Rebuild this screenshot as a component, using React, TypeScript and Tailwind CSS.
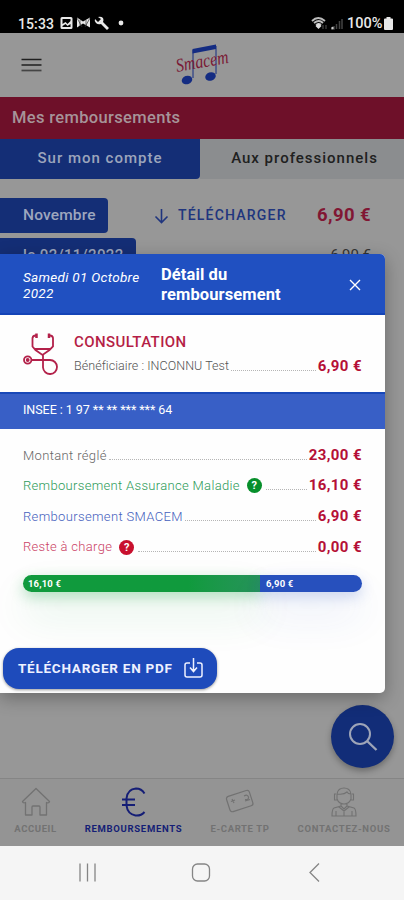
import type { ReactNode } from 'react';

interface DetailLine {
    label: string;
    amount: string;
    labelClass: string;
    helpClass?: string;
}

const LINES: DetailLine[] = [
    { label: 'Montant réglé', amount: '23,00 €', labelClass: 'text-[#666] tracking-[0.35px]' },
    { label: 'Remboursement Assurance Maladie', amount: '16,10 €', labelClass: 'text-[#2c9a58] tracking-[0.32px]', helpClass: 'bg-[#078f2b]' },
    { label: 'Remboursement SMACEM', amount: '6,90 €', labelClass: 'text-[#4560bd] tracking-[0.35px]' },
    { label: 'Reste à charge', amount: '0,00 €', labelClass: 'text-[#cb4265] tracking-[0.32px]', helpClass: 'bg-[#c8102e]' },
];

const amountClass = 'shrink-0 text-[15px] font-bold leading-none tracking-[0.4px] text-[#b50f36]';

function StatusBar() {
    return (
        <div className="flex h-[33px] shrink-0 items-end bg-black pr-[11px] pb-px pl-[18px] text-[#e8e8e8]">
            <span className="w-[42px] text-[14px] leading-[16px] font-medium tracking-[0.1px]">15:33</span>
            {/* Notifications */}
            <svg width="66" height="15" viewBox="0 0 66 15" className="mb-px" fill="currentColor">
                <path fillRule="evenodd" d="M2 1h9q1.500 0 1.500 1.500v9q0 1.500-1.500 1.500H2Q.5 13 .5 11.500v-9Q.5 1 2 1Zm.500 2v5l3-2 2 2 3-3V3Zm0 8h8V8l-3 2-2-2-3 2Z" />
                <path d="M17 1.500l6 4 7-4v10l-7-4-6 4Z" />
                <path d="M20 4v6M26 4v6M17 2l5 9M30 2l-5 9" stroke="#333" strokeWidth=".7" />
                <path d="M35 3l3 3 3-3-3-2q3-1 5 1 1 2 0 4l6 6-2 2-6-6q-3 1-5-1-2-2-1-4Z" />
                <circle cx="61" cy="7" r="2.400" />
            </svg>
            <svg width="33" height="15" viewBox="0 0 33 15" className="mb-px ml-auto" fill="none">
                <path d="M1 5q6-6 13 0M3 7q5-4 9 0M5 9q3-2 5 0" stroke="#bbb" strokeWidth="1.800" />
                <path d="M7.500 7l3 3-3 3-3-3Z" fill="#ddd" />
                <path d="M12 9v4M15 9v4" stroke="#555" strokeWidth="1" />
                <path d="M20 13h3v-3M25.500 13V8M28.500 13V5M31 13V3" stroke="#444" strokeWidth="1.500" />
                <circle cx="21.500" cy="12" r="1.200" fill="#ccc" />
            </svg>
            <span className="ml-[3px] w-[37px] text-[14.500px] leading-[16px] font-medium whitespace-nowrap">100%</span>
            <svg width="9" height="13" viewBox="0 0 9 13" className="mb-[2px]" fill="currentColor">
                <path d="M2.500 0h4v1.500H8q1 0 1 1V12q0 1-1 1H1q-1 0-1-1V2.500q0-1 1-1h1.500Z" />
            </svg>
        </div>
    );
}

function Logo() {
    return (
        <svg width="64" height="48" viewBox="0 0 64 48" className="absolute top-[8px] left-[173px] overflow-visible">
            <path d="M19.500 8L43 3.500v4.500L19.500 12.500Z" fill="#142c82" />
            <path d="M20 9v28M43 5v28" stroke="#142c82" strokeWidth="1" />
            <ellipse cx="14" cy="39" rx="5.400" ry="4.200" transform="rotate(-20 14 39)" fill="#142c82" />
            <ellipse cx="37.500" cy="35.500" rx="5.400" ry="4.200" transform="rotate(-20 37.500 35.500)" fill="#142c82" />
            <text x="4" y="31" transform="rotate(-10 4 31)" textLength="53" lengthAdjust="spacingAndGlyphs" fontFamily="Liberation Serif, serif" fontStyle="italic" fontSize="19" fill="#7a1935">
                Smacem
            </text>
        </svg>
    );
}

function HelpBadge({ className }: { className: string }) {
    return (
        <span className={`ml-[7px] mr-[2px] flex size-[15px] shrink-0 items-center justify-center rounded-full text-[11px] leading-none font-bold text-white ${className}`}>
            ?
        </span>
    );
}

function Leader() {
    return <span className="mx-[2px] mb-[1px] h-[10px] flex-1 border-b border-dotted border-[#b5b5b5]" />;
}

function Stethoscope() {
    return (
        <svg width="36" height="42" viewBox="0 0 36 42" fill="none" stroke="#b3214a" strokeWidth="1.800" className="shrink-0">
            <path d="M13.500 2.500h-1Q10 2.500 9.500 5v8.500l3 3.500 7 5 7-5 3.500-3.500V5q-.500-2.500-3-2.500h-1M12 16h15.500M20 22v12.500a7 7 0 1 0 7-7.500H8.500" />
            <path d="M13.500.5v4.500M26 .5v4.500" strokeWidth="2.500" />
            <circle cx="4.700" cy="27" r="3.700" />
            <circle cx="4.700" cy="27" r="1" />
        </svg>
    );
}

function NavItem({ label, className, children }: { label: string; className: string; children: ReactNode }) {
    return (
        <div className={`flex flex-col items-center text-[9.500px] leading-[12px] font-bold whitespace-nowrap ${className}`}>
            <span className="flex h-[32px] items-center justify-center">{children}</span>
            <span className="mt-[5px]">{label}</span>
        </div>
    );
}

function BottomNav() {
    return (
        <div className="flex h-[68px] shrink-0 border-t border-[#858585] bg-[#949494] pt-[7px] text-[#727272]">
            <NavItem label="ACCUEIL" className="w-[71px] tracking-[0.6px]">
                <svg width="30" height="30" viewBox="0 0 30 30" fill="none" stroke="currentColor" strokeWidth="1.300">
                    <path d="M1.500 14.500L15 1.500l13.500 13q-.500 2-3 1V28H19v-8q0-1-1-1h-6q-1 0-1 1v8H4.500V15.500q-2.500 1-3-1Z" strokeLinejoin="round" />
                </svg>
            </NavItem>
            <NavItem label="REMBOURSEMENTS" className="w-[125px] text-[#151e76] tracking-[0.7px]">
                <svg width="26" height="30" viewBox="0 0 26 30" fill="none" stroke="currentColor" strokeWidth="2">
                    <path d="M23.500 6.500Q20.500 1.500 15 1.500 6.500 2 5.500 11.500v7q1 8.500 9 10 5.500.5 9-3.500M1 12.500h13M1 18h13" />
                </svg>
            </NavItem>
            <NavItem label="E-CARTE TP" className="w-[88px] tracking-[0.6px]">
                <svg width="30" height="28" viewBox="0 0 30 28" fill="none" stroke="currentColor" strokeWidth="1.200">
                    <rect x="3" y="5" width="24" height="16" rx="2.500" transform="rotate(-18 15 14)" />
                    <path d="M6 13.500l4-1.500M7 11l2 4M19 8q3.500-2 4.500 1 .5 3-3.500 2.500M20 13l5-1.500" />
                </svg>
            </NavItem>
            <NavItem label="CONTACTEZ-NOUS" className="w-[120px] tracking-[0.7px]">
                <svg width="28" height="30" viewBox="0 0 28 30" fill="none" stroke="currentColor" strokeWidth="1.100">
                    <path d="M7 7q1-6 7-6t7 6v5q-2 5-7 5t-7-5ZM7 7q7 1 10-2 1 2 4 2M6 7H4.500v6H7M22 7h1.500v6H21M11 16v3l-7 2q-2 1-2 8h24q0-7-2-8l-7-2v-3M9 20l5 4 5-4M14 24v5M6 24v5M22 24v5M11 19l3 3 3-3" />
                </svg>
            </NavItem>
        </div>
    );
}

function SystemNav() {
    return (
        <div className="flex h-[54px] shrink-0 items-center bg-[#f5f5f5] pl-[78px]">
            <svg width="246" height="22" viewBox="0 0 246 22" fill="none" stroke="#858585" strokeWidth="1.300">
                <path d="M2 1.500v18M9.500 1.500v18M17 1.500v18" />
                <rect x="114.500" y="2" width="17" height="17" rx="5" />
                <path d="M241 1.500l-9 9 9 9" />
            </svg>
        </div>
    );
}

function DetailModal() {
    return (
        <div className="absolute top-[254px] left-0 h-[439px] w-[385px] overflow-hidden rounded-r-[5px] bg-[#fefefe] shadow-[0_5px_18px_rgba(0,0,0,0.3)]">
            <div className="flex h-[61px] border-b-2 border-[#1444b7] bg-[#2050c1] text-white">
                <p className="w-[161px] pt-[15px] pl-[23px] text-[13.500px] leading-[16px] tracking-[0.3px] whitespace-nowrap italic">
                    Samedi 01 Octobre
                    <br />
                    2022
                </p>
                <p className="w-[180px] pt-[11px] text-[16.500px] leading-[20px] font-bold tracking-[0.1px]">
                    Détail du
                    <br />
                    remboursement
                </p>
                <svg width="12" height="12" viewBox="0 0 12 12" className="mt-[25px] ml-[8px]" stroke="currentColor" strokeWidth="1.400">
                    <path d="M1 1l10 10M11 1L1 11" />
                </svg>
            </div>

            {/* Care item */}
            <div className="flex h-[77px] pt-[18px] pr-[23px] pl-[23px]">
                <Stethoscope />
                <div className="ml-[15px] flex-1">
                    <p className="text-[15px] leading-[18px] font-medium tracking-[0.4px] text-[#b51e46]">CONSULTATION</p>
                    <div className="mt-[6px] flex h-[18px] items-center">
                        <span className="text-[12.500px] font-light tracking-[0.05px] whitespace-nowrap text-[#555]">Bénéficiaire : INCONNU Test</span>
                        <Leader />
                        <span className={amountClass}>6,90 €</span>
                    </div>
                </div>
            </div>

            <div className="h-[37px] border-t-2 border-[#1848b8] bg-[#385fc6] pt-[7px] pl-[23px] text-[12.500px] leading-[18px] tracking-[-0.05px] text-white">
                INSEE : 1 97 ** ** *** *** 64
            </div>

            <div className="flex flex-col pt-[11px] pr-[23px] pl-[23px]">
                {LINES.map((line) => (
                    <div key={line.label} className="flex h-[30.600px] items-center">
                        <span className={`text-[13px] font-light whitespace-nowrap ${line.labelClass}`}>{line.label}</span>
                        {line.helpClass && <HelpBadge className={line.helpClass} />}
                        <Leader />
                        <span className={amountClass}>{line.amount}</span>
                    </div>
                ))}
            </div>

            {/* Share of each payer */}
            <div className="mx-[23px] mt-[13px] flex h-[17px] text-[9.500px] leading-[17px] font-bold tracking-[0.15px] text-white">
                <div className="w-[237px] rounded-l-full bg-linear-to-r from-[#109a3d] from-70% to-[#26935a] pl-[5px] shadow-[0_5px_14px_rgba(16,154,61,0.3),0_22px_40px_rgba(16,154,61,0.14)]">16,10 €</div>
                <div className="flex-1 rounded-r-full bg-[#2750bd] pl-[6px] shadow-[0_5px_14px_rgba(39,80,189,0.22),0_22px_40px_rgba(39,80,189,0.12)]">6,90 €</div>
            </div>

            <button className="absolute top-[394px] left-[3px] flex h-[41px] w-[214px] items-center rounded-[16px] bg-[#1e4bbb] pl-[15px] text-[13.500px] font-bold tracking-[0.75px] whitespace-nowrap text-[#eef1ff] shadow-[0_1px_3px_rgba(0,0,0,0.4)]">
                TÉLÉCHARGER EN PDF
                <svg width="19" height="21" viewBox="0 0 19 21" className="absolute right-[14px]" fill="none" stroke="currentColor" strokeWidth="1.500">
                    <path d="M6 5H3Q1 5 1 7v10q0 2 2 2h13q2 0 2-2V7q0-2-2-2h-3M9.500 0v13M6 9.500l3.500 4 3.500-4" />
                </svg>
            </button>
        </div>
    );
}

export default function App() {
    return (
        <div className="relative flex h-[900px] w-[404px] flex-col overflow-hidden bg-[#979797] font-['Roboto',sans-serif]">
            <StatusBar />
            <header className="relative h-[64px] shrink-0 bg-[#979797]">
                <svg width="21" height="16" viewBox="0 0 21 16" className="mt-[24px] ml-[21px]" stroke="#202020" strokeWidth="1.700">
                    <path d="M.5 2.500h20M.5 8h20" />
                    <path d="M.5 13.500h20" stroke="#444" />
                </svg>
                <Logo />
            </header>
            <h1 className="h-[42px] shrink-0 bg-[#6e1029] pl-[12px] text-[16.500px] leading-[42px] font-medium tracking-[0.35px] text-[#a69499]">
                Mes remboursements
            </h1>

            <div className="flex h-[40px] shrink-0 text-center text-[15px] leading-[39px] font-medium">
                <div className="w-[200px] rounded-br-[4px] bg-[#142e76] tracking-[1px] text-[#9ca5bc]">Sur mon compte</div>
                <div className="flex-1 bg-[#8b8d8f] pl-[5px] tracking-[1px] text-[#202020]">Aux professionnels</div>
            </div>

            <div className="mt-[19px] flex h-[35px] shrink-0 items-center">
                <div className="h-[35px] w-[108px] rounded-r-[4px] bg-[#142e76] pl-[23px] text-[15.500px] leading-[35px] font-medium tracking-[0.15px] text-[#9da6be]">Novembre</div>
                <div className="ml-[46px] flex w-[163px] items-center text-[14px] font-medium tracking-[1.2px] text-[#20357e]">
                    <svg width="15" height="16" viewBox="0 0 15 16" className="mr-[9px]" fill="none" stroke="currentColor" strokeWidth="1.600">
                        <path d="M7.500 1v13M1.500 8.500l6 6 6-6" />
                    </svg>
                    TÉLÉCHARGER
                </div>
                <span className="text-[18.500px] font-bold tracking-[0.4px] whitespace-nowrap text-[#811633]">6,90 €</span>
            </div>
            <div className="mt-[5px] flex h-[32px] shrink-0 items-start justify-between pr-[33px] text-[15px] leading-[35px]">
                <div className="h-[32px] w-[136px] rounded-tr-[4px] bg-[#142e76] pl-[23px] font-medium tracking-[0.4px] text-[#9da6be]">le 02/11/2022</div>
                <span className="text-[#333]">6,90 €</span>
            </div>

            <div className="flex-1" />
            <BottomNav />
            <SystemNav />

            <button className="absolute top-[705px] left-[331px] flex size-[63px] items-center justify-center rounded-full bg-[#122d78] text-[#9ea5b8] shadow-[0_3px_6px_rgba(0,0,0,0.3)]">
                <svg width="30" height="30" viewBox="0 0 30 30" fill="none" stroke="currentColor" strokeWidth="2">
                    <circle cx="12" cy="12" r="10" />
                    <path d="M19 19l9.500 9" strokeWidth="2.400" />
                </svg>
            </button>

            <DetailModal />
        </div>
    );
}
